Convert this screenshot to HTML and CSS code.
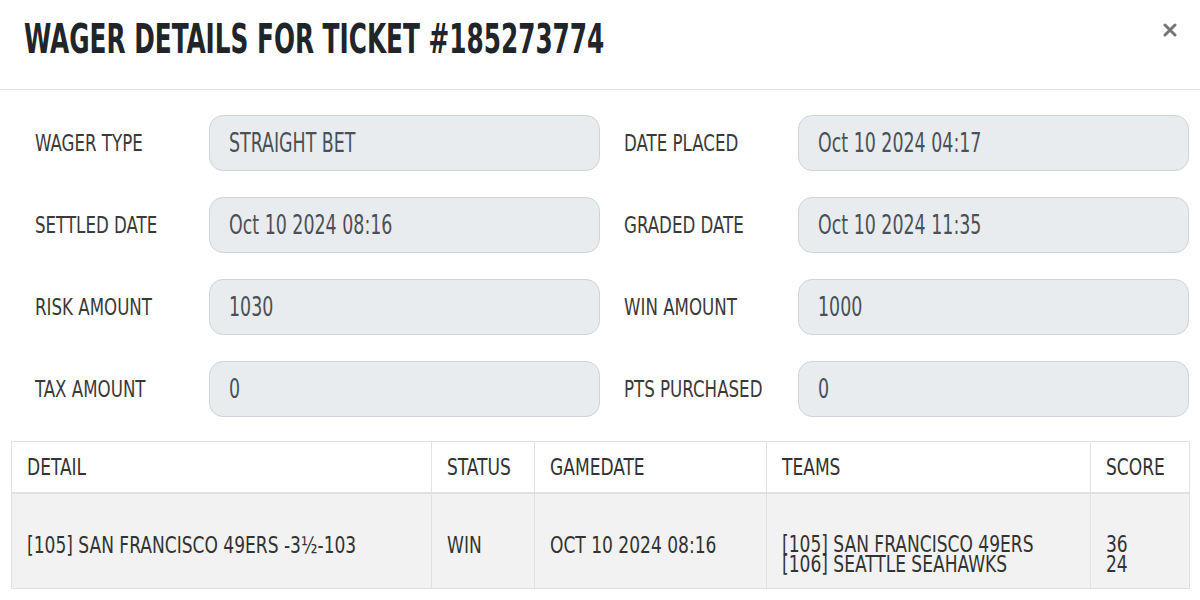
FILE: index.html
```html
<!DOCTYPE html>
<html lang="en">
<head>
<meta charset="utf-8">
<title>Wager Details</title>
<link rel="stylesheet" href="styles.css">
</head>
<body>
<div class="modal">
  <header class="modal-header">
    <h1 class="title"><span class="sx">WAGER DETAILS FOR TICKET #185273774</span></h1>
    <button class="close" type="button" aria-label="Close">
      <svg width="14" height="14" viewBox="0 0 14 14"><path d="M2 2 L12 12 M12 2 L2 12" stroke="#757575" stroke-width="3" stroke-linecap="round"/></svg>
    </button>
  </header>
  <div class="modal-body">
    <div class="form-grid">
      <div class="field"><span class="label"><span class="sx">WAGER TYPE</span></span><div class="input"><span class="sx">STRAIGHT BET</span></div></div>
      <div class="field"><span class="label"><span class="sx">DATE PLACED</span></span><div class="input"><span class="sx">Oct 10 2024 04:17</span></div></div>
      <div class="field"><span class="label"><span class="sx">SETTLED DATE</span></span><div class="input"><span class="sx">Oct 10 2024 08:16</span></div></div>
      <div class="field"><span class="label"><span class="sx">GRADED DATE</span></span><div class="input"><span class="sx">Oct 10 2024 11:35</span></div></div>
      <div class="field"><span class="label"><span class="sx">RISK AMOUNT</span></span><div class="input"><span class="sx">1030</span></div></div>
      <div class="field"><span class="label"><span class="sx">WIN AMOUNT</span></span><div class="input"><span class="sx">1000</span></div></div>
      <div class="field"><span class="label"><span class="sx">TAX AMOUNT</span></span><div class="input"><span class="sx">0</span></div></div>
      <div class="field"><span class="label"><span class="sx">PTS PURCHASED</span></span><div class="input"><span class="sx">0</span></div></div>
    </div>
    <table class="detail-table">
      <colgroup>
        <col class="c-detail"><col class="c-status"><col class="c-date"><col class="c-teams"><col class="c-score">
      </colgroup>
      <thead>
        <tr>
          <th><span class="sx">DETAIL</span></th>
          <th><span class="sx">STATUS</span></th>
          <th><span class="sx">GAMEDATE</span></th>
          <th><span class="sx">TEAMS</span></th>
          <th><span class="sx">SCORE</span></th>
        </tr>
      </thead>
      <tbody>
        <tr>
          <td><span class="sx">[105] SAN FRANCISCO 49ERS -3½-103</span></td>
          <td><span class="sx">WIN</span></td>
          <td><span class="sx">OCT 10 2024 08:16</span></td>
          <td><span class="sx stack"><span class="line">[105] SAN FRANCISCO 49ERS</span><span class="line">[106] SEATTLE SEAHAWKS</span></span></td>
          <td><span class="sx stack"><span class="line">36</span><span class="line">24</span></span></td>
        </tr>
      </tbody>
    </table>
  </div>
</div>
</body>
</html>
```

FILE: styles.css
```css
* { box-sizing: border-box; }
html, body { margin: 0; padding: 0; background: #fff; }
body {
  font-family: "DejaVu Sans Condensed", "Liberation Sans", sans-serif;
  color: #333;
}
.sx {
  display: inline-block;
  white-space: nowrap;
  transform-origin: 0 50%;
}
.modal { width: 1200px; }
.modal-header {
  height: 90px;
  display: flex;
  justify-content: space-between;
  align-items: flex-start;
  padding: 0 23px 0 24px;
  border-bottom: 1px solid #e0e0ea;
}
.title {
  margin: 19px 0 0;
  font-size: 40px;
  line-height: 40px;
  font-weight: 700;
  color: #212529;
  white-space: nowrap;
}
.title .sx { transform: scaleX(0.688); }
.close {
  margin-top: 23px;
  padding: 0;
  border: 0;
  background: none;
  width: 14px;
  height: 14px;
  display: flex;
}
.modal-body { padding: 25px 11px 0; }
.form-grid {
  display: grid;
  grid-template-columns: 589px 589px;
  row-gap: 26px;
}
.field { display: flex; align-items: center; }
.label {
  width: 198px;
  padding-left: 24px;
  font-size: 23px;
  line-height: 28px;
  color: #3a3a3a;
  white-space: nowrap;
}
.label .sx { transform: scaleX(0.805); }
.input {
  width: 391px;
  height: 56px;
  display: flex;
  align-items: center;
  padding-left: 19px;
  background: #e9ecef;
  border: 1px solid #ced4da;
  border-radius: 14px;
  font-size: 26px;
  line-height: 30px;
  color: #495057;
  white-space: nowrap;
}
.input .sx { transform: scaleX(0.745); }
.detail-table {
  margin-top: 24px;
  width: 1178px;
  table-layout: fixed;
  border-collapse: collapse;
  font-size: 23px;
  color: #333;
}
.detail-table .sx { transform: scaleX(0.825); }
.c-detail { width: 420px; }
.c-status { width: 103px; }
.c-date { width: 232px; }
.c-teams { width: 324px; }
.c-score { width: 99px; }
.detail-table th, .detail-table td {
  border: 1px solid #dee2e6;
  text-align: left;
  white-space: nowrap;
  padding: 0 15px;
  overflow: visible;
}
.detail-table th {
  height: 51px;
  font-weight: 400;
  line-height: 24px;
  vertical-align: middle;
  border-bottom: 2px solid #dee2e6;
  background: #fff;
}
.detail-table td {
  height: 96px;
  vertical-align: top;
  padding-top: 39px;
  line-height: 24px;
  background: #f2f2f2;
}
.stack { line-height: 20px; margin-top: 1px; }
.line { display: block; }
```
